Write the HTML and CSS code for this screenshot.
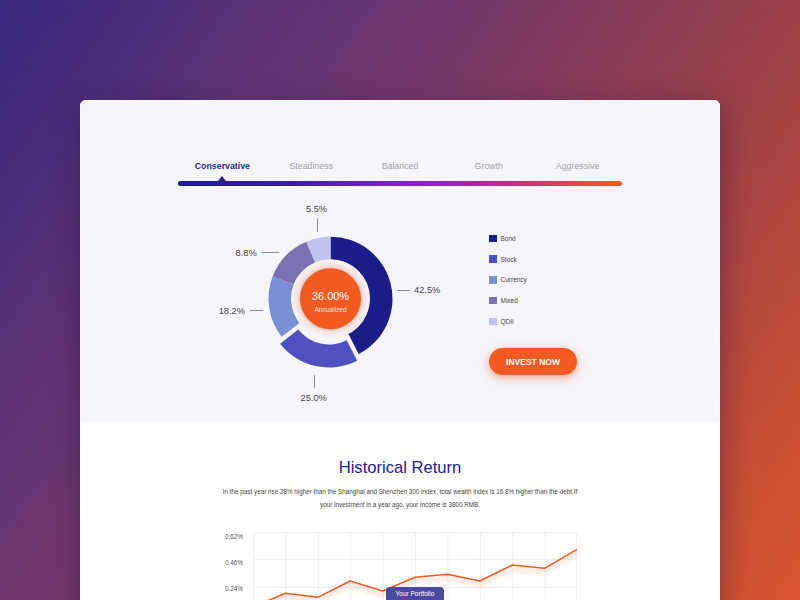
FILE: index.html
```html
<!DOCTYPE html>
<html lang="en">
<head>
<meta charset="utf-8">
<title>Portfolio</title>
<link rel="stylesheet" href="styles.css">
</head>
<body>
<div class="card">
  <section class="top">
    <div class="tabs">
      <div class="tab active">Conservative</div>
      <div class="tab">Steadiness</div>
      <div class="tab">Balanced</div>
      <div class="tab">Growth</div>
      <div class="tab">Aggressive</div>
    </div>
    <div class="pointer-row"><span class="pointer"></span></div>
    <div class="bar"></div>
    <div class="main">
      <svg class="donut" width="250" height="215" viewBox="0 0 250 215">
        <defs>
          <radialGradient id="halo" cx="50%" cy="50%" r="50%">
            <stop offset="0.74" stop-color="#eab8ab"/>
            <stop offset="0.84" stop-color="#f4e2e1"/>
            <stop offset="1" stop-color="#f8f5f8"/>
          </radialGradient>
        </defs>
        <path fill="#1d1d89" d="M125.5 41.7 A62 62 0 0 1 153.65 158.94 L143.21 138.45 A39 39 0 0 0 125.5 64.7Z"/>
        <path fill="#4f51c1" d="M152.14 165.77 A62 62 0 0 1 75.13 148.70 L93.26 134.54 A39 39 0 0 0 141.70 145.28Z"/>
        <path fill="#7b8fd6" d="M76.64 141.87 A62 62 0 0 1 67.62 81.48 L89.09 89.72 A39 39 0 0 0 94.77 127.71Z"/>
        <path fill="#7a70b2" d="M67.62 81.48 A62 62 0 0 1 101.28 46.63 L110.26 67.80 A39 39 0 0 0 89.09 89.72Z"/>
        <path fill="#c2c2ef" d="M101.28 46.63 A62 62 0 0 1 125.5 41.7 L125.5 64.7 A39 39 0 0 0 110.26 67.80Z"/>
        <circle cx="125.5" cy="103.7" r="39.5" fill="url(#halo)"/>
        <circle cx="125.5" cy="103.7" r="30.5" fill="#f25a22"/>
        <text class="c-big" x="125.5" y="105">36.00%</text>
        <text class="c-small" x="125.5" y="117.3">Annualized</text>
        <g class="leader">
          <line x1="112.5" y1="23.3" x2="112.5" y2="36.7"/>
          <line x1="56.7" y1="57.5" x2="74.3" y2="57.5"/>
          <line x1="192.3" y1="95.5" x2="205" y2="95.5"/>
          <line x1="45" y1="115.5" x2="58.3" y2="115.5"/>
          <line x1="109.5" y1="180" x2="109.5" y2="192.7"/>
        </g>
        <text class="lbl" x="111.5" y="16.8" text-anchor="middle">5.5%</text>
        <text class="lbl" x="51.7" y="60.6" text-anchor="end">8.8%</text>
        <text class="lbl" x="209" y="98.3">42.5%</text>
        <text class="lbl" x="40" y="119" text-anchor="end">18.2%</text>
        <text class="lbl" x="108.7" y="206" text-anchor="middle">25.0%</text>
      </svg>
      <div class="side">
        <ul class="legend">
          <li><span class="swatch sw-bond"></span>Bond</li>
          <li><span class="swatch sw-stock"></span>Stock</li>
          <li><span class="swatch sw-currency"></span>Currency</li>
          <li><span class="swatch sw-mixed"></span>Mixed</li>
          <li><span class="swatch sw-qdii"></span>QDII</li>
        </ul>
        <button class="btn" type="button">INVEST NOW</button>
      </div>
    </div>
  </section>
  <section class="history">
    <h2>Historical Return</h2>
    <p>In the past year rise 28% higher than the Shanghai and Shenzhen 300 index, total wealth index is 16.8% higher than the debt.If<br>your investment in a year ago, your income is 3800 RMB.</p>
    <div class="chart">
      <svg class="chart-svg" width="370" height="95" viewBox="0 0 370 95">
        <defs>
          <filter id="blur" x="-10%" y="-50%" width="120%" height="200%">
            <feGaussianBlur stdDeviation="2"/>
          </filter>
        </defs>
        <g class="grid">
          <line x1="38" y1="7.5" x2="362" y2="7.5"/>
          <line x1="38" y1="34.5" x2="362" y2="34.5"/>
          <line x1="38" y1="62.5" x2="362" y2="62.5"/>
          <line x1="38" y1="89.5" x2="362" y2="89.5"/>
          <line x1="38.5" y1="7" x2="38.5" y2="95"/>
          <line x1="70.9" y1="7" x2="70.9" y2="95"/>
          <line x1="103.3" y1="7" x2="103.3" y2="95"/>
          <line x1="135.7" y1="7" x2="135.7" y2="95"/>
          <line x1="168.1" y1="7" x2="168.1" y2="95"/>
          <line x1="200.5" y1="7" x2="200.5" y2="95"/>
          <line x1="232.9" y1="7" x2="232.9" y2="95"/>
          <line x1="265.3" y1="7" x2="265.3" y2="95"/>
          <line x1="297.7" y1="7" x2="297.7" y2="95"/>
          <line x1="330.1" y1="7" x2="330.1" y2="95"/>
          <line x1="361.5" y1="7" x2="361.5" y2="95"/>
        </g>
        <text class="axis" x="28" y="13.7">0.62%</text>
        <text class="axis" x="28" y="40">0.46%</text>
        <text class="axis" x="28" y="65.5">0.24%</text>
        <polyline class="glow" filter="url(#blur)" points="38,86 70.4,72 102.8,76 135.2,60 167.6,70 200,56 232.4,53 264.8,60 297.2,44 329.6,47 362,28"/>
        <polyline class="line" points="38,82 70.4,68.3 102.8,72.3 135.2,56 167.6,66 200,52.3 232.4,49.3 264.8,56 297.2,40 329.6,43.3 362,24.3"/>
      </svg>
      <div class="tooltip">Your Portfolio</div>
    </div>
  </section>
</div>
</body>
</html>
```
FILE: styles.css
```css
html, body {
  margin: 0;
}
body {
  width: 800px;
  height: 600px;
  overflow: hidden;
  background: linear-gradient(125deg, #38287f 0%, #6e3670 34.4%, #9a4048 65.6%, #c44e36 86.4%, #d9552e 100%);
  font-family: "Liberation Sans", Arial, sans-serif;
}
.card {
  width: 640px;
  height: 520px;
  margin: 100px auto 0;
  border-radius: 6px;
  overflow: hidden;
  background: #fff;
  box-shadow: 0 8px 30px rgba(40, 15, 70, 0.45);
}
.top {
  height: 322px;
  box-sizing: border-box;
  padding: 60px 98px 0;
  background: #f6f5fb;
}
.tabs {
  display: grid;
  grid-template-columns: repeat(5, 1fr);
  font-size: 8.8px;
  line-height: 12px;
  color: #a3a2ad;
  text-align: center;
}
.tab.active {
  color: #2b2a8f;
  font-weight: bold;
}
.pointer-row {
  display: grid;
  grid-template-columns: repeat(5, 1fr);
  margin-top: 4px;
  height: 5px;
}
.pointer {
  justify-self: center;
  width: 0;
  height: 0;
  border-left: 4px solid transparent;
  border-right: 4px solid transparent;
  border-bottom: 5px solid #25218a;
}
.bar {
  height: 4.5px;
  border-radius: 3px;
  background: linear-gradient(90deg, #1f1d87 0%, #3a1f98 25%, #6a22b8 42%, #8a24c6 55%, #a52c9e 68%, #cc4262 84%, #f45a22 100%);
}
.main {
  display: flex;
  margin-top: 9px;
}
.donut {
  display: block;
  flex: none;
  width: 250px;
  height: 215px;
  margin-left: 27px;
}
.c-big {
  font-size: 11px;
  fill: #fff;
  text-anchor: middle;
}
.c-small {
  font-size: 6.5px;
  fill: rgba(255, 255, 255, 0.88);
  text-anchor: middle;
}
.leader line {
  stroke: #8a8a90;
  stroke-width: 1;
}
.lbl {
  font-size: 9.3px;
  fill: #444;
}
.side {
  display: flex;
  flex-direction: column;
  align-items: flex-start;
  margin-left: 34px;
  padding-top: 40px;
}
.legend {
  list-style: none;
  margin: 0;
  padding: 0;
  display: flex;
  flex-direction: column;
  gap: 12.7px;
}
.legend li {
  display: flex;
  align-items: center;
  gap: 4px;
  height: 8px;
  font-size: 6.5px;
  color: #444;
}
.swatch {
  width: 7.5px;
  height: 7.5px;
}
.sw-bond { background: #1d1d89; }
.sw-stock { background: #4f51c1; }
.sw-currency { background: #7b8fd6; }
.sw-mixed { background: #7a70b2; }
.sw-qdii { background: #c2c2ef; }
.btn {
  margin-top: 22.8px;
  width: 88px;
  height: 27px;
  padding: 0;
  border: 0;
  border-radius: 14px;
  background: #f25a22;
  color: #fff;
  font-family: inherit;
  font-size: 8.5px;
  font-weight: bold;
  box-shadow: 0 3px 10px rgba(242, 90, 34, 0.5);
}
.history {
  padding-top: 36.3px;
  text-align: center;
}
.history h2 {
  margin: 0;
  font-size: 16.6px;
  line-height: 20px;
  font-weight: normal;
  color: #22228e;
}
.history p {
  margin: 8.2px 0 0;
  font-size: 6.3px;
  line-height: 12.3px;
  color: #444;
}
.chart {
  position: relative;
  width: 370px;
  height: 95px;
  margin: 13.9px auto 0;
}
.chart-svg {
  display: block;
}
.grid line {
  stroke: #eeedf8;
  stroke-width: 1;
}
.axis {
  font-size: 6.4px;
  fill: #555;
  text-anchor: end;
}
.glow {
  fill: none;
  stroke: rgba(242, 90, 34, 0.18);
  stroke-width: 4;
}
.line {
  fill: none;
  stroke: #f25a22;
  stroke-width: 1.5;
  stroke-linejoin: round;
}
.tooltip {
  position: absolute;
  left: 170.7px;
  top: 61.7px;
  width: 58.6px;
  height: 16px;
  border-radius: 4px;
  background: #4b4aa3;
  color: #fff;
  font-size: 6.5px;
  line-height: 13.2px;
  text-align: center;
}
```
